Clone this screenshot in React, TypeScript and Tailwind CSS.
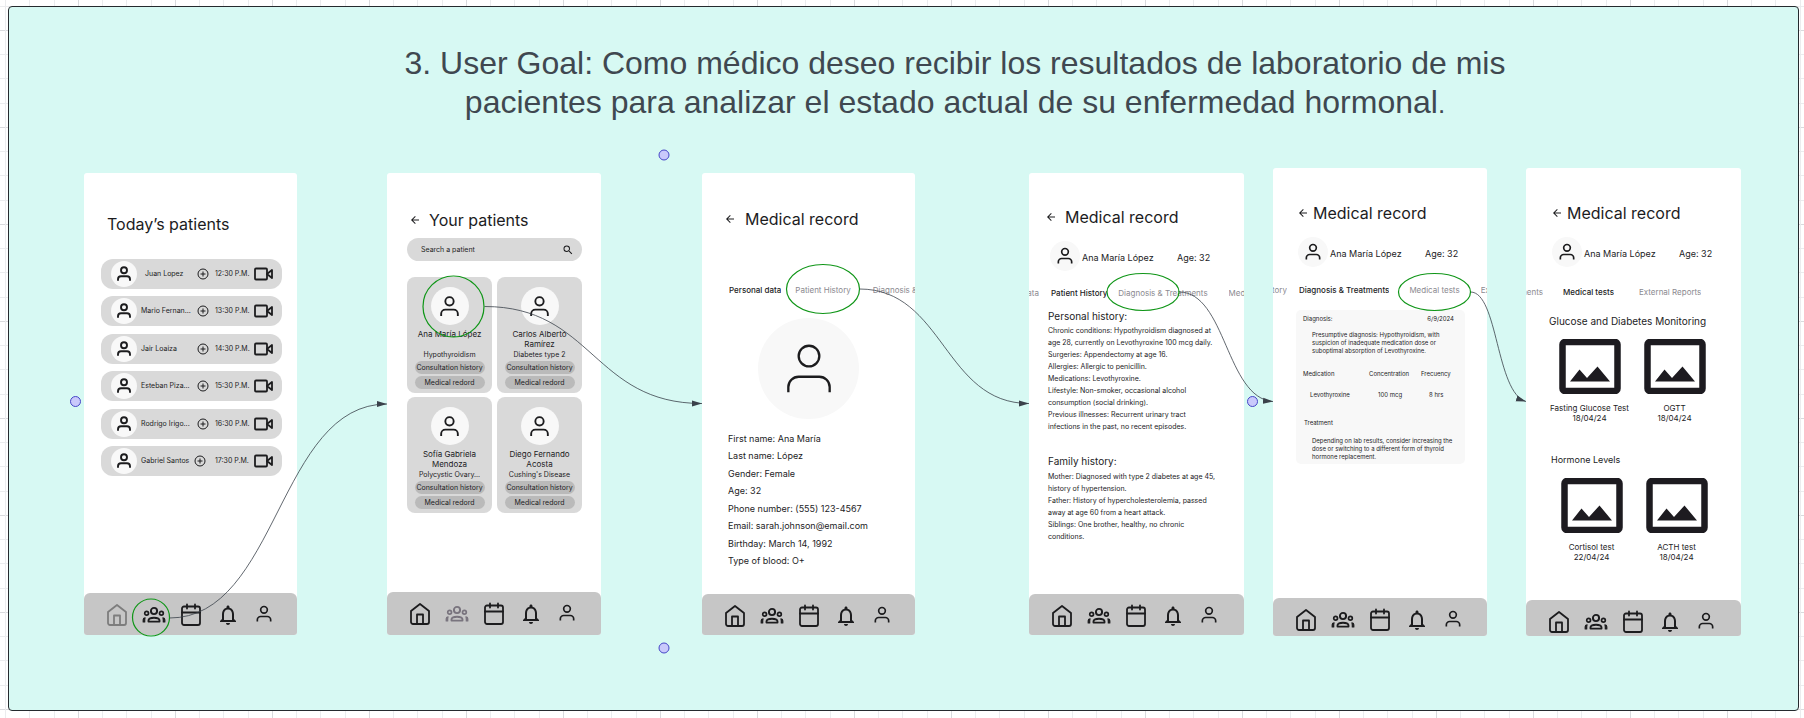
import type { ReactNode } from "react";
import { MdArrowBack, MdNotificationsNone, MdSearch } from "react-icons/md";

type StrokeProps = { className?: string; stroke?: number };

function PersonIcon({ className = "size-5", stroke = 2 }: StrokeProps) {
  return (
    <svg viewBox="0 0 24 24" fill="none" stroke="currentColor" strokeWidth={stroke} className={className} aria-hidden="true">
      <path d="M20 21v-2a4 4 0 0 0-4-4H8a4 4 0 0 0-4 4v2" />
      <circle cx="12" cy="7" r="4" />
    </svg>
  );
}

function HomeIcon() {
  return (
    <svg viewBox="0 0 24 24" fill="none" stroke="currentColor" strokeWidth="1.8" strokeLinejoin="round" className="size-6" aria-hidden="true">
      <path d="M3 9l9-7 9 7v11a2 2 0 0 1-2 2H5a2 2 0 0 1-2-2z" />
      <path d="M9 22V12.500h6V22" />
    </svg>
  );
}

function GroupIcon() {
  return (
    <svg viewBox="0 0 24 24" fill="none" stroke="currentColor" strokeWidth="1.9" strokeLinejoin="round" className="size-6" aria-hidden="true">
      <circle cx="12" cy="8" r="3.100" />
      <circle cx="4.600" cy="10.200" r="1.900" strokeWidth="1.700" />
      <circle cx="19.400" cy="10.200" r="1.900" strokeWidth="1.700" />
      <path d="M6.500 18.600v-1c0-1.900 2.500-2.900 5.500-2.900s5.500 1 5.500 2.900v1z" />
      <path d="M1.200 19v-2.300c0-1.100.700-1.800 1.900-1.900-.300.700-.400 1.400-.400 2.200v2z" strokeWidth="1.200" fill="currentColor" />
      <path d="M22.800 19v-2.300c0-1.100-.700-1.800-1.900-1.900.300.700.400 1.400.400 2.200v2z" strokeWidth="1.200" fill="currentColor" />
    </svg>
  );
}

function CalendarIcon() {
  return (
    <svg viewBox="0 0 24 24" fill="none" stroke="currentColor" strokeWidth="1.8" strokeLinecap="round" className="size-6" aria-hidden="true">
      <rect x="3" y="3.500" width="18" height="18.500" rx="2" />
      <path d="M16 1.500v4M8 1.500v4M3 9.500h18" />
    </svg>
  );
}

function PlusIcon() {
  return (
    <svg viewBox="0 0 12 12" fill="none" stroke="currentColor" strokeWidth="1" className="size-3" aria-hidden="true">
      <circle cx="6" cy="6" r="5" />
      <path d="M6 3.500v5M3.500 6h5" />
    </svg>
  );
}

function VideoIcon() {
  return (
    <svg viewBox="0 0 20 14" fill="none" stroke="currentColor" strokeWidth="1.800" strokeLinejoin="round" className="h-[14px] w-5" aria-hidden="true">
      <rect x="1" y="1.500" width="12" height="11" rx="1" />
      <path d="M13 7l5-4v8z" />
    </svg>
  );
}

function PictureIcon() {
  return (
    <svg viewBox="0 0 62 55" className="h-[55px] w-[62px]" aria-hidden="true">
      <rect x="3.500" y="3" width="55" height="49" rx="2.500" fill="none" stroke="#1d1b20" strokeWidth="6.500" />
      <path d="M11 42.500L20.500 30.500L28 39L38.500 27.500L51 42.500Z" fill="#1d1b20" />
    </svg>
  );
}

function BottomBar({ active, className }: { active?: "home" | "patients"; className: string }) {
  return (
    <nav className={`mt-auto flex shrink-0 items-start gap-[13px] rounded-t-[6px] bg-[#c6c6c6] pt-[10px] pl-[21px] ${className}`}>
      <button type="button" aria-label="Home" className={active === "home" ? "text-[#7d7d7d]" : ""}>
        <HomeIcon />
      </button>
      <button type="button" aria-label="Patients" className={active === "patients" ? "text-[#79747e]" : ""}>
        <GroupIcon />
      </button>
      <button type="button" aria-label="Calendar">
        <CalendarIcon />
      </button>
      <button type="button" aria-label="Notifications">
        <MdNotificationsNone className="size-6" />
      </button>
      <button type="button" aria-label="Profile" className="pt-px pl-px">
        <PersonIcon />
      </button>
    </nav>
  );
}

function Avatar({ className, children }: { className: string; children: ReactNode }) {
  return <span className={`flex shrink-0 items-center justify-center rounded-full bg-[#f8f8f8] ${className}`}>{children}</span>;
}

function Title({ className, children }: { className: string; children: ReactNode }) {
  return (
    <header className={`flex items-center ${className}`}>
      <button type="button" aria-label="Back">
        <MdArrowBack className="size-3" />
      </button>
      <h2 className="text-[16px] leading-5">{children}</h2>
    </header>
  );
}

function PatientLine({ className }: { className: string }) {
  return (
    <div className={`flex items-center text-[9px] leading-3 ${className}`}>
      <Avatar className="size-[30px]">
        <PersonIcon />
      </Avatar>
      <span className="ml-[2px] w-[95px] pt-1">Ana María López</span>
      <span className="pt-1">Age: 32</span>
    </div>
  );
}

function Tab({ active, className = "", children }: { active?: boolean; className?: string; children: ReactNode }) {
  return (
    <button type="button" className={`flex shrink-0 justify-end overflow-hidden whitespace-nowrap ${active ? "font-medium" : "text-[#8b8a90]"} ${className}`}>
      {children}
    </button>
  );
}

const appointments = [
  { name: "Juan Lopez", time: "12:30 P.M.", inset: true },
  { name: "Mario Fernan...", time: "13:30 P.M." },
  { name: "Jair Loaiza", time: "14:30 P.M." },
  { name: "Esteban Piza...", time: "15:30 P.M." },
  { name: "Rodrigo Irigo...", time: "16:30 P.M." },
  { name: "Gabriel Santos", time: "17:30 P.M.", wide: true },
];

const patients = [
  { name: "Ana María López", condition: "Hypothyroidism" },
  { name: "Carlos Alberto Ramírez", condition: "Diabetes type 2" },
  { name: "Sofía Gabriela Mendoza", condition: "Polycystic Ovary..." },
  { name: "Diego Fernando Acosta", condition: "Cushing's Disease" },
];

const details = [
  "First name: Ana María",
  "Last name: López",
  "Gender: Female",
  "Age: 32",
  "Phone number: (555) 123-4567",
  "Email: sarah.johnson@email.com",
  "Birthday: March 14, 1992",
  "Type of blood: O+",
];

const personalHistory = [
  "Chronic conditions: Hypothyroidism diagnosed at age 28, currently on Levothyroxine 100 mcg daily.",
  "Surgeries: Appendectomy at age 16.",
  "Allergies: Allergic to penicillin.",
  "Medications: Levothyroxine.",
  "Lifestyle: Non-smoker, occasional alcohol consumption (social drinking).",
  "Previous illnesses: Recurrent urinary tract infections in the past, no recent episodes.",
];

const familyHistory = [
  "Mother: Diagnosed with type 2 diabetes at age 45, history of hypertension.",
  "Father: History of hypercholesterolemia, passed away at age 60 from a heart attack.",
  "Siblings: One brother, healthy, no chronic conditions.",
];

function TodayScreen() {
  return (
    <section className="flex h-[462px] w-[213px] flex-col overflow-hidden rounded-[3px] bg-white">
      <h2 className="mt-[41px] ml-[23px] text-[16px] leading-5">Today’s patients</h2>
      <ul className="mt-[25px] ml-[17px] flex h-[217px] w-[181px] flex-col justify-between text-[7px] leading-[10px]">
        {appointments.map((a) => (
          <li key={a.name} className="flex h-[30px] items-center rounded-[12px] bg-[#d9d9d9] pl-[10px]">
            <Avatar className="size-[26px]">
              <PersonIcon className="size-[18px]" stroke={2.5} />
            </Avatar>
            <span className={`ml-1 shrink-0 whitespace-nowrap ${a.wide ? "w-[53px]" : "w-14"} ${a.inset ? "pl-1" : ""}`}>{a.name}</span>
            <button type="button" aria-label="Details" className={a.wide ? "mr-[9px]" : "mr-[6px]"}>
              <PlusIcon />
            </button>
            <time className="w-[39px] shrink-0 whitespace-nowrap">{a.time}</time>
            <button type="button" aria-label="Video call">
              <VideoIcon />
            </button>
          </li>
        ))}
      </ul>
      <BottomBar active="home" className="h-[42px]" />
    </section>
  );
}

function PatientsScreen() {
  return (
    <section className="ml-[90px] flex h-[462px] w-[214px] flex-col overflow-hidden rounded-[3px] bg-white">
      <Title className="mt-[37px] ml-[22px] gap-2">Your patients</Title>
      <label className="mt-2 ml-5 flex h-[23px] w-[175px] items-center rounded-full bg-[#d9d9d9] pr-2 pl-[14px]">
        <input type="text" aria-label="Search a patient" placeholder="Search a patient" className="min-w-0 flex-1 text-[7px] leading-[10px] outline-none placeholder:text-[#1f1f1f]" />
        <MdSearch className="size-3" />
      </label>
      <ul className="mt-4 ml-5 grid w-[175px] grid-cols-2 gap-x-[5px] gap-y-[4px]">
        {patients.map((p) => (
          <li key={p.name} className="flex h-[116px] flex-col items-center rounded-[8px] bg-[#d9d9d9] pt-[10px]">
            <Avatar className="size-[38px]">
              <PersonIcon className="size-[25px]" stroke={1.8} />
            </Avatar>
            <h3 className="mt-1 flex h-[21px] w-[72px] justify-center text-center text-[8px] leading-[10px]">{p.name}</h3>
            <p className="text-[7px] leading-[10px]">{p.condition}</p>
            <button type="button" className="mt-[1px] h-[13px] w-[70px] rounded-full bg-[#bababa] text-[7px] leading-[13px] whitespace-nowrap">
              Consultation history
            </button>
            <button type="button" className="mt-[2px] h-[13px] w-[70px] rounded-full bg-[#bababa] text-[7px] leading-[13px]">
              Medical redord
            </button>
          </li>
        ))}
      </ul>
      <BottomBar active="patients" className="h-[43px]" />
    </section>
  );
}

function PersonalDataScreen() {
  return (
    <section className="ml-[101px] flex h-[462px] w-[213px] flex-col overflow-hidden rounded-[3px] bg-white">
      <Title className="mt-9 ml-[22px] gap-[9px]">Medical record</Title>
      <div className="mt-14 ml-[27px] flex text-[8px] leading-[10px]">
        <Tab active>Personal data</Tab>
        <Tab className="ml-[14px]">Patient History</Tab>
        <Tab className="ml-[22px]">Diagnosis &amp; Treatments</Tab>
      </div>
      <Avatar className="mt-[23px] ml-14 size-[101px]">
        <PersonIcon className="size-[62px]" stroke={0.9} />
      </Avatar>
      <ul className="mt-[11px] ml-[26px] grid h-[140px] items-center text-[9px] leading-3">
        {details.map((d) => (
          <li key={d}>{d}</li>
        ))}
      </ul>
      <BottomBar className="h-[41px]" />
    </section>
  );
}

function HistoryScreen() {
  return (
    <section className="ml-[114px] flex h-[462px] w-[215px] flex-col overflow-hidden rounded-[3px] bg-white">
      <Title className="mt-[34px] ml-4 gap-2">Medical record</Title>
      <PatientLine className="mt-[14px] ml-[21px]" />
      <div className="mt-[17px] flex text-[8px] leading-[10px]">
        <Tab className="w-[10px]">Personal data</Tab>
        <Tab active className="ml-[12px]">Patient History</Tab>
        <Tab className="ml-[11px]">Diagnosis &amp; Treatments</Tab>
        <Tab className="ml-[21px]">Medical tests</Tab>
      </div>
      <h3 className="mt-3 ml-[19px] text-[10px] leading-3">Personal history:</h3>
      <div className="mt-[3px] ml-[19px] w-[170px] text-[7px] leading-3">
        {personalHistory.map((line) => (
          <p key={line}>{line}</p>
        ))}
      </div>
      <h3 className="mt-[22px] ml-[19px] text-[10px] leading-3">Family history:</h3>
      <div className="mt-1 ml-[19px] w-[174px] text-[7px] leading-3">
        {familyHistory.map((line) => (
          <p key={line}>{line}</p>
        ))}
      </div>
      <BottomBar className="h-[41px]" />
    </section>
  );
}

function DiagnosisScreen() {
  return (
    <section className="-mt-[5px] ml-[29px] flex h-[468px] w-[214px] flex-col overflow-hidden rounded-[3px] bg-white">
      <Title className="mt-[35px] ml-6 gap-1">Medical record</Title>
      <PatientLine className="mt-[14px] ml-[25px]" />
      <div className="mt-[18px] flex text-[8px] leading-[10px]">
        <Tab className="w-[14px]">Patient History</Tab>
        <Tab active className="ml-[12px]">Diagnosis &amp; Treatments</Tab>
        <Tab className="ml-5">Medical tests</Tab>
        <Tab className="ml-[21px]">External Reports</Tab>
      </div>
      <article className="mt-[15px] ml-[23px] h-[154px] w-[169px] rounded-[5px] bg-[#f8f8f8] pt-[5px] text-[6px] leading-[8px]">
        <header className="flex justify-between pr-[11px] pl-[7px]">
          <h3>Diagnosis:</h3>
          <time>6/9/2024</time>
        </header>
        <p className="mt-2 ml-4 w-[140px]">
          Presumptive diagnosis: Hypothyroidism, with suspicion of inadequate medication dose or suboptimal absorption of Levothyroxine.
        </p>
        <table className="mt-[14px] ml-[7px] text-left">
          <thead>
            <tr className="h-[10px]">
              <th className="w-[66px] font-normal">Medication</th>
              <th className="w-[52px] font-normal">Concentration</th>
              <th className="font-normal">Frecuency</th>
            </tr>
          </thead>
          <tbody>
            <tr>
              <td className="pt-[12px] pl-[7px]">Levothyroxine</td>
              <td className="pt-[12px] pl-[9px]">100 mcg</td>
              <td className="pt-[12px] pl-2">8 hrs</td>
            </tr>
          </tbody>
        </table>
        <h3 className="mt-5 ml-2">Treatment</h3>
        <p className="mt-[10px] ml-4 w-[148px]">
          Depending on lab results, consider increasing the dose or switching to a different form of thyroid hormone replacement.
        </p>
      </article>
      <BottomBar className="h-[38px]" />
    </section>
  );
}

function TestResult({ name, date }: { name: string; date: string }) {
  return (
    <li className="flex flex-col items-center text-[8px] leading-[10px]">
      <PictureIcon />
      <p className="mt-[9px] whitespace-nowrap">{name}</p>
      <time>{date}</time>
    </li>
  );
}

function TestsScreen() {
  return (
    <section className="-mt-[5px] ml-[39px] flex h-[468px] w-[215px] flex-col overflow-hidden rounded-[3px] bg-white">
      <Title className="mt-[35px] ml-[25px] gap-1">Medical record</Title>
      <PatientLine className="mt-[14px] ml-[26px]" />
      <div className="mt-5 flex text-[8px] leading-[10px]">
        <Tab className="w-[17px]">Diagnosis &amp; Treatments</Tab>
        <Tab active className="ml-5">Medical tests</Tab>
        <Tab className="ml-[25px]">External Reports</Tab>
      </div>
      <h3 className="mt-[18px] ml-[23px] text-[10px] leading-3">Glucose and Diabetes Monitoring</h3>
      <ul className="mt-3 ml-[21px] grid w-[170px] grid-cols-2">
        <TestResult name="Fasting Glucose Test" date="18/04/24" />
        <TestResult name="OGTT" date="18/04/24" />
      </ul>
      <h3 className="mt-[31px] ml-[25px] text-[9px] leading-3">Hormone Levels</h3>
      <ul className="mt-3 ml-[23px] grid w-[170px] grid-cols-2">
        <TestResult name="Cortisol test" date="22/04/24" />
        <TestResult name="ACTH test" date="18/04/24" />
      </ul>
      <BottomBar className="h-9" />
    </section>
  );
}

/* Coordinates are measured from the top left corner of the first screen. */
function Connectors() {
  return (
    <svg className="pointer-events-none absolute top-0 left-0 overflow-visible" width="1657" height="468" fill="none" aria-hidden="true">
      <defs>
        <marker id="tip" markerUnits="userSpaceOnUse" markerWidth="11" markerHeight="7" refX="10" refY="3.500" orient="auto">
          <path d="M0 0.500L10 3.500L0 6.500Z" fill="#3a414a" />
        </marker>
        <marker id="tip-slanted" markerUnits="userSpaceOnUse" markerWidth="11" markerHeight="7" refX="10" refY="3.500" orient="18">
          <path d="M0 0.500L10 3.500L0 6.500Z" fill="#3a414a" />
        </marker>
      </defs>
      <g stroke="#3a414a" strokeWidth="0.8">
        <path d="M85.500 445C194 445 194 231 303 231" markerEnd="url(#tip)" />
        <path d="M400.500 133.500C509 133.500 509 230.500 618 230.500" markerEnd="url(#tip)" />
        <path d="M775.500 116C860 116 860 230.500 945 230.500" markerEnd="url(#tip)" />
        <path d="M1095 119C1142 119 1142 225 1189 228.500" markerEnd="url(#tip)" />
        <path d="M1386.500 119C1414 119 1412 220 1442 228.500" markerEnd="url(#tip-slanted)" />
      </g>
      <g stroke="#109618" strokeWidth="1.200">
        <ellipse cx="67" cy="444.500" rx="18.500" ry="18.500" />
        <ellipse cx="369.500" cy="133.500" rx="30.500" ry="30.500" />
        <ellipse cx="739" cy="116" rx="36.500" ry="24.500" />
        <ellipse cx="1059" cy="119" rx="36" ry="18.500" />
        <ellipse cx="1350.500" cy="119" rx="36" ry="18.500" />
      </g>
      <g stroke="#4646c8" fill="#c9c9fb">
        <circle cx="-8.500" cy="228.500" r="5" />
        <circle cx="580" cy="-18" r="5" />
        <circle cx="580" cy="475" r="5" />
        <circle cx="1168.500" cy="228.500" r="5" />
      </g>
    </svg>
  );
}

export default function App() {
  return (
    <main className="flex min-h-screen bg-white bg-[linear-gradient(to_right,#d9dadd_1px,transparent_1px,transparent_24px,#ebecee_24px,#ebecee_25px,transparent_25px,transparent_48px,#ebecee_48px,#ebecee_49px,transparent_49px,transparent_73px,#ebecee_73px,#ebecee_74px,transparent_74px),linear-gradient(to_bottom,#d9dadd_1px,transparent_1px,transparent_24px,#ebecee_24px,#ebecee_25px,transparent_25px,transparent_48px,#ebecee_48px,#ebecee_49px,transparent_49px,transparent_73px,#ebecee_73px,#ebecee_74px,transparent_74px)] bg-[length:97px_97px] bg-[position:78px_30px] pt-[6px] pr-[5px] pb-[7px] pl-2 font-['Inter',sans-serif] text-[#1c1c1e]">
      <div className="flex-1 rounded-[4px] border border-[#252a2e] bg-[#d7f9f3]">
        <h1 className="mt-[37px] pr-[260px] pl-[363px] text-center font-['Liberation_Sans',sans-serif] text-[32px] leading-[39px] text-[#3f4850]">
          3. User Goal: Como médico deseo recibir los resultados de laboratorio de mis pacientes para analizar el estado actual de su enfermedad hormonal
          <span className="text-[26px]">.</span>
        </h1>
        <div className="relative mt-[49px] ml-[75px] flex w-max items-start">
          <TodayScreen />
          <PatientsScreen />
          <PersonalDataScreen />
          <HistoryScreen />
          <DiagnosisScreen />
          <TestsScreen />
          <Connectors />
        </div>
      </div>
    </main>
  );
}
